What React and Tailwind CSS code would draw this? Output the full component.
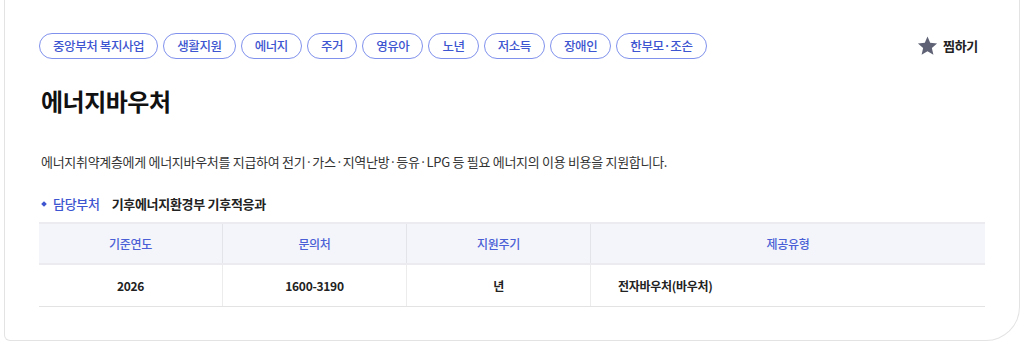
export default function App() {
  const tags = ["중앙부처 복지사업", "생활지원", "에너지", "주거", "영유아", "노년", "저소득", "장애인", "한부모·조손"];
  const font = { fontFamily: '"Noto Sans CJK KR", "Noto Sans", sans-serif' };
  return (
    <div className="w-[1024px] h-[343px] bg-white px-[4px] overflow-hidden" style={font}>
      <div className="h-[341px] border-x border-b border-[#e3e3e3] rounded-bl-[6px] rounded-br-[34px] px-[34px] pt-[33px]">
        <div className="flex items-center justify-between">
          <div className="flex gap-[5px]">
            {tags.map((t) => (
              <span
                key={t}
                className="h-[26px] px-[13px] flex items-center rounded-full border-[1.5px] border-[#7f91ec] text-[#3d55d0] text-[12.5px] tracking-[-0.4px] font-medium leading-none"
              >
                {t}
              </span>
            ))}
          </div>
          <div className="flex items-center gap-[5px] mr-[7px]">
            <svg width="21" height="20" viewBox="0 0 24 23">
              <path d="M12 0.5l3.1 7.3 7.9.7-6 5.2 1.8 7.8L12 17.4 5.2 21.5 7 13.7 1 8.5l7.9-.7z" fill="#5e6274" />
            </svg>
            <span className="text-[13px] font-bold text-[#222] tracking-[-0.3px]">찜하기</span>
          </div>
        </div>
        <h1 className="mt-[25px] text-[24px] font-bold text-[#111] leading-[34px] ml-[2px] tracking-[-0.5px]">에너지바우처</h1>
        <p className="mt-[35px] text-[13px] text-[#333] leading-[18px] ml-[2px] tracking-[-0.3px]">
          에너지취약계층에게 에너지바우처를 지급하여 전기·가스·지역난방·등유·LPG 등 필요 에너지의 이용 비용을 지원합니다.
        </p>
        <div className="mt-[24px] flex items-center text-[13px] leading-[18px] ml-[2px] tracking-[-0.3px]">
          <span className="w-[4px] h-[4px] bg-[#3d55d0] rotate-45 ml-[1px] mr-[7px]"></span>
          <span className="text-[#3d55d0] font-medium">담당부처</span>
          <span className="ml-[12px] text-[#222] font-bold">기후에너지환경부 기후적응과</span>
        </div>
        <div className="mt-[9px] border-t-2 border-[#ececf0]">
          <div className="grid grid-cols-[184px_184px_184px_1fr] bg-[#f4f5fa] h-[41px] border-b-2 border-[#ececf0] text-[12px] text-[#4a5fd6] font-medium tracking-[-0.3px]">
            <div className="flex items-center justify-center border-r border-[#e3e4ea]">기준연도</div>
            <div className="flex items-center justify-center border-r border-[#e3e4ea]">문의처</div>
            <div className="flex items-center justify-center border-r border-[#e3e4ea]">지원주기</div>
            <div className="flex items-center justify-center">제공유형</div>
          </div>
          <div className="grid grid-cols-[184px_184px_184px_1fr] h-[42px] border-b border-[#e3e3e3] text-[12px] text-[#222] font-bold tracking-[-0.3px]">
            <div className="flex items-center justify-center border-r border-[#ececec]">2026</div>
            <div className="flex items-center justify-center border-r border-[#ececec]">1600-3190</div>
            <div className="flex items-center justify-center border-r border-[#ececec]">년</div>
            <div className="flex items-center pl-[27px]">전자바우처(바우처)</div>
          </div>
        </div>
      </div>
    </div>
  );
}
